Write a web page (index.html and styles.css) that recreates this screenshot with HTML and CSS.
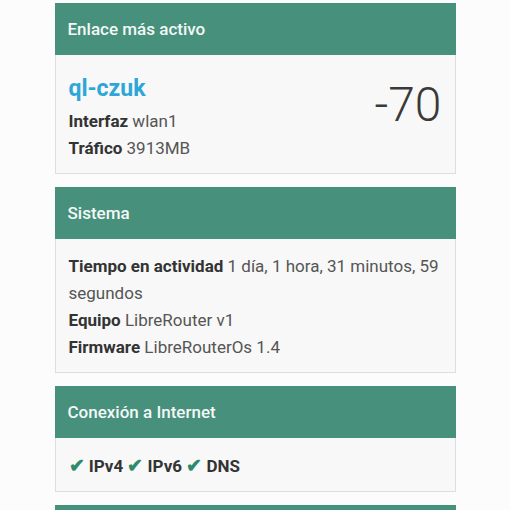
FILE: index.html
```html
<!DOCTYPE html>
<html lang="es">
<head>
<meta charset="utf-8">
<title>Estado</title>
<link rel="stylesheet" href="styles.css">
</head>
<body>
<main class="page">
  <section class="card">
    <header class="card-header">Enlace más activo</header>
    <div class="card-body link-body">
      <div class="link-info">
        <div class="link-name">ql-czuk</div>
        <div class="row"><b>Interfaz</b> wlan1</div>
        <div class="row"><b>Tráfico</b> 3913MB</div>
      </div>
      <div class="signal">-70</div>
    </div>
  </section>
  <section class="card">
    <header class="card-header">Sistema</header>
    <div class="card-body">
      <div class="row"><b>Tiempo en actividad</b> 1 día, 1 hora, 31 minutos, 59 segundos</div>
      <div class="row"><b>Equipo</b> LibreRouter v1</div>
      <div class="row"><b>Firmware</b> LibreRouterOs 1.4</div>
    </div>
  </section>
  <section class="card">
    <header class="card-header">Conexión a Internet</header>
    <div class="card-body">
      <div class="row checks"><span class="check">✔</span> IPv4 <span class="check">✔</span> IPv6 <span class="check">✔</span> DNS</div>
    </div>
  </section>
  <section class="card">
    <header class="card-header">Nodos</header>
    <div class="card-body">
      <div class="row">&nbsp;</div>
    </div>
  </section>
</main>
</body>
</html>
```

FILE: styles.css
```css
html, body {
  margin: 0;
  padding: 0;
  background: #fcfcfc;
}
body {
  font-family: Roboto, "Noto Sans", "Liberation Sans", sans-serif;
  font-size: 17px;
  color: #555;
}
.page {
  width: 401px;
  margin: 0 auto;
  padding-top: 3px;
  display: flex;
  flex-direction: column;
  gap: 13px;
}
.card {
  border: 1px solid #dedede;
  background: #f8f8f8;
}
.card-header {
  background: #46907c;
  color: #f4f8f6;
  font-weight: 500;
  font-size: 17px;
  line-height: 22px;
  padding: 15px 13px;
  margin: -1px -1px 0;
}
.card-body {
  padding: 14px 13px 11px;
}
.row {
  line-height: 27px;
}
.row b {
  color: #333;
  font-weight: 700;
}
.link-body {
  display: flex;
  justify-content: space-between;
  align-items: flex-start;
}
.link-name {
  font-size: 23px;
  font-weight: 700;
  color: #2ea6d7;
  line-height: 39px;
}
.signal {
  font-size: 48px;
  font-weight: 300;
  color: #3a3a3a;
  line-height: 48px;
  margin-top: 12px;
}
.checks {
  color: #333;
  font-weight: 700;
}
.check {
  color: #2d8a6e;
  font-size: 19px;
}
```
